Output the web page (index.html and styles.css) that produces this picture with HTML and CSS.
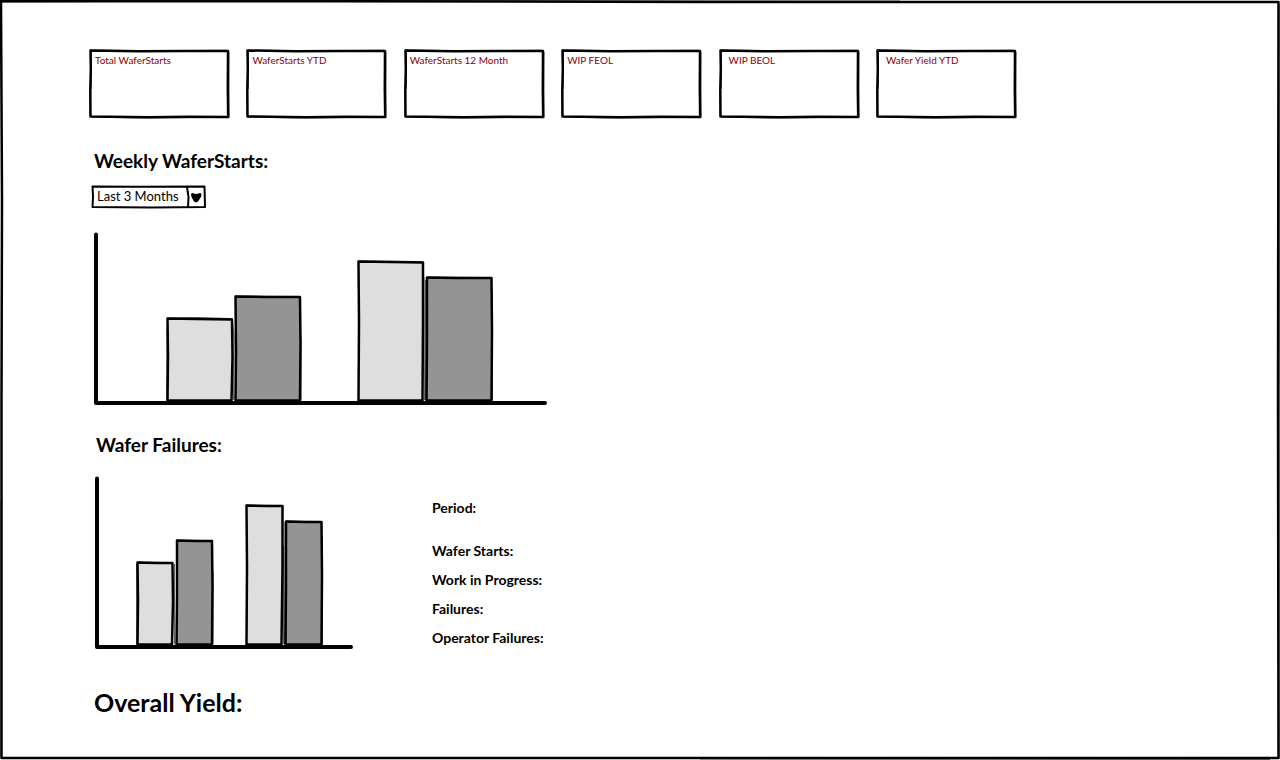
FILE: index.html
```html
<!DOCTYPE html>
<html lang="en">
<head>
<meta charset="utf-8">
<meta name="viewport" content="width=device-width, initial-scale=1">
<title>Wafer Dashboard</title>
<link rel="stylesheet" href="styles.css">
</head>
<body>
<svg class="symbols" aria-hidden="true">
  <symbol id="card-frame" viewBox="0 0 141 70" preserveAspectRatio="none">
    <path class="ink" d="M1.500 1.500L50 2.300L95 2L139 2L138.800 40L139.200 68L100 67.800L60 68.300L1.500 67.500L1.300 40L1.800 20Z"/>
    <path class="trace" d="M1 1L60 1.800L138 1.200M140 3L140 30L140 68.500L90 68.800L50 69L2 68M1 67L1 40M2.500 40L2.500 3"/>
  </symbol>
  <symbol id="page-frame" viewBox="0 0 1280 760" preserveAspectRatio="none">
    <path class="ink" d="M1 1L330 1.2L700 2L1278.5 2L1278 400L1278.5 758L600 758L1.5 758L1.5 400L2 200Z"/>
    <path class="trace" d="M0 2L330 0.5L900 1M1279 5L1279.5 300L1279 758.5M1270 759.5L700 759M1 757L1 500"/>
  </symbol>
</svg>
<main class="page">
  <svg class="page-frame" aria-hidden="true"><use href="#page-frame"/></svg>

  <section class="cards" aria-label="Key figures">
    <article class="card"><svg class="card-frame" aria-hidden="true"><use href="#card-frame"/></svg><h2 class="card-title">Total WaferStarts</h2></article>
    <article class="card"><svg class="card-frame" aria-hidden="true"><use href="#card-frame"/></svg><h2 class="card-title">WaferStarts YTD</h2></article>
    <article class="card"><svg class="card-frame" aria-hidden="true"><use href="#card-frame"/></svg><h2 class="card-title">WaferStarts 12 Month</h2></article>
    <article class="card"><svg class="card-frame" aria-hidden="true"><use href="#card-frame"/></svg><h2 class="card-title">WIP FEOL</h2></article>
    <article class="card card-wide-inset"><svg class="card-frame" aria-hidden="true"><use href="#card-frame"/></svg><h2 class="card-title">WIP BEOL</h2></article>
    <article class="card card-wide-inset"><svg class="card-frame" aria-hidden="true"><use href="#card-frame"/></svg><h2 class="card-title">Wafer Yield YTD</h2></article>
  </section>

  <section class="panel starts">
    <h2 class="heading" id="starts-title">Weekly WaferStarts:</h2>
    <div class="picker">
      <select class="picker-select" aria-labelledby="starts-title">
        <option>Last 3 Months</option>
      </select>
      <svg class="picker-frame" viewBox="0 0 115 24" aria-hidden="true">
        <path class="select-ink" d="M1.500 1.500L45 1.800L113.500 1.500L114 22L60 22.500L1.500 22L2 12ZM96 2L97.500 12L97 22"/>
        <path d="M101 8L105 9L109.500 8L110.500 9.500L110 12L107 16.500L105 17.500L103 16.500L100.500 12L100 9Z"/>
      </svg>
    </div>
    <svg class="chart chart-large" viewBox="0 0 458 174" role="img" aria-label="Weekly wafer starts bar chart">
      <path class="axis" d="M5 2.500V171H454"/>
      <path class="bar light" d="M76.500 86.500L105 87L141 87.500L141.500 125L140.500 168.500L76.500 168.500L77 125Z"/>
      <path class="bar dark" d="M144.500 64.500L175 65L209 65L209.500 110L209 168.500L144.500 168.500L145 120Z"/>
      <path class="bar light" d="M267.500 29.500L300 30L332 30.500L332 90L331.500 168.500L267.500 168.500L268 90Z"/>
      <path class="bar dark" d="M336 45.500L365 46L400.500 46L401 100L400.500 168.500L335.500 168.500L336 110Z"/>
      <path class="trace" d="M76 86L105 85.500L141 86.500L143 105L142.500 168M76 95L75.500 168M144 64L209 64.500M210 105L210 168M268 29L331 29.500M333 45L333.500 168M334.500 48L334.500 168M337 45L400 45.500M401.500 60L401.500 168"/>
    </svg>
  </section>

  <section class="panel failures">
    <h2 class="heading heading-inset">Wafer Failures:</h2>
    <div class="failures-body">
      <svg class="chart chart-small" viewBox="0 0 264 174" role="img" aria-label="Wafer failures bar chart">
        <path class="axis" d="M6 2.500V171H260"/>
        <path class="bar light" d="M46.500 86.500L65 87L81.500 87L82 125L81 168.500L46.500 168.500L47 125Z"/>
        <path class="bar dark" d="M86 64.500L104 65L121 65L121.500 110L121 168.500L85.500 168.500L86 120Z"/>
        <path class="bar light" d="M155.500 29.500L175 30L191.500 30L191.500 90L190.500 168.500L155.500 168.500L156 90Z"/>
        <path class="bar dark" d="M195 45.500L213 46L230.500 46L231 100L230.500 168.500L194.500 168.500L195 110Z"/>
        <path class="trace" d="M47 86L81 86.500M45.500 88L45.500 168M83.500 88L83.500 168M86 64L120 64.500M122 95L122 168M155 29L191 29.500M192.500 70L192.500 168M194 46L193.500 168M195 45L230 45.500M231.500 60L231.500 168"/>
      </svg>
      <ul class="details">
        <li class="detail detail-lead">Period:</li>
        <li class="detail">Wafer Starts:</li>
        <li class="detail">Work in Progress:</li>
        <li class="detail">Failures:</li>
        <li class="detail">Operator Failures:</li>
      </ul>
    </div>
  </section>

  <section class="panel yield">
    <h1 class="heading heading-large">Overall Yield:</h1>
  </section>
</main>
</body>
</html>
```
FILE: styles.css
```css
* {
  box-sizing: border-box;
}

body {
  margin: 0;
  background: #fff;
  color: #000;
  font-family: Lato, "Open Sans", sans-serif;
}

h1,
h2,
ul {
  margin: 0;
  padding: 0;
}

.symbols {
  position: absolute;
  width: 0;
  height: 0;
}

.page {
  position: relative;
  min-height: 100vh;
  padding: 49px 89px 40px;
}

.page-frame,
.card-frame {
  position: absolute;
  inset: 0;
  width: 100%;
  height: 100%;
  pointer-events: none;
}

.ink {
  fill: none;
  stroke: #000;
  stroke-width: 2.5;
  stroke-linejoin: round;
}

.trace {
  fill: none;
  stroke: #000;
  stroke-width: 1;
  stroke-opacity: 0.6;
}

.cards {
  display: flex;
  justify-content: space-between;
  max-width: 928px;
}

.card {
  position: relative;
  flex: 0 1 141px;
  min-height: 70px;
  padding: 3px 6px;
}

.card-wide-inset {
  padding-left: 10px;
}

.card-title {
  color: #8b0000;
  font-size: 10px;
  font-weight: 400;
  line-height: 16px;
  white-space: nowrap;
}

.panel {
  padding-left: 2px;
}

.starts {
  margin-top: 30px;
}

.heading {
  padding-left: 3px;
  font-size: 19px;
  font-weight: 700;
  line-height: 24px;
}

.heading-inset {
  padding-left: 5px;
}

.heading-large {
  font-size: 25px;
  line-height: 32px;
}

.picker {
  position: relative;
  width: 115px;
  height: 24px;
  margin-top: 12px;
}

.picker-select {
  width: 100%;
  height: 100%;
  padding: 0 20px 2px 6px;
  border: 0;
  background: #fff;
  color: #000;
  font-family: inherit;
  font-size: 13px;
  appearance: none;
}

.picker-frame {
  position: absolute;
  inset: 0;
  width: 100%;
  height: 100%;
  pointer-events: none;
}

.select-ink {
  fill: none;
  stroke: #000;
  stroke-width: 2;
  stroke-linejoin: round;
}

.chart {
  display: block;
  flex: none;
  max-width: 100%;
}

.chart-large {
  width: 458px;
  margin-top: 23px;
}

.chart-small {
  width: 264px;
}

.axis {
  fill: none;
  stroke: #000;
  stroke-width: 4;
  stroke-linecap: round;
  stroke-linejoin: round;
}

.bar {
  stroke: #000;
  stroke-width: 2.5;
  stroke-linejoin: round;
}

.light {
  fill: #dedede;
}

.dark {
  fill: #949494;
}

.failures {
  margin-top: 27px;
}

.failures-body {
  display: flex;
  align-items: flex-start;
  gap: 77px;
  margin-top: 19px;
}

.details {
  padding-top: 17px;
  list-style: none;
}

.detail {
  font-size: 14px;
  font-weight: 700;
  line-height: 29px;
}

.detail-lead {
  margin-bottom: 14px;
}

.yield {
  margin-top: 34px;
}
```
